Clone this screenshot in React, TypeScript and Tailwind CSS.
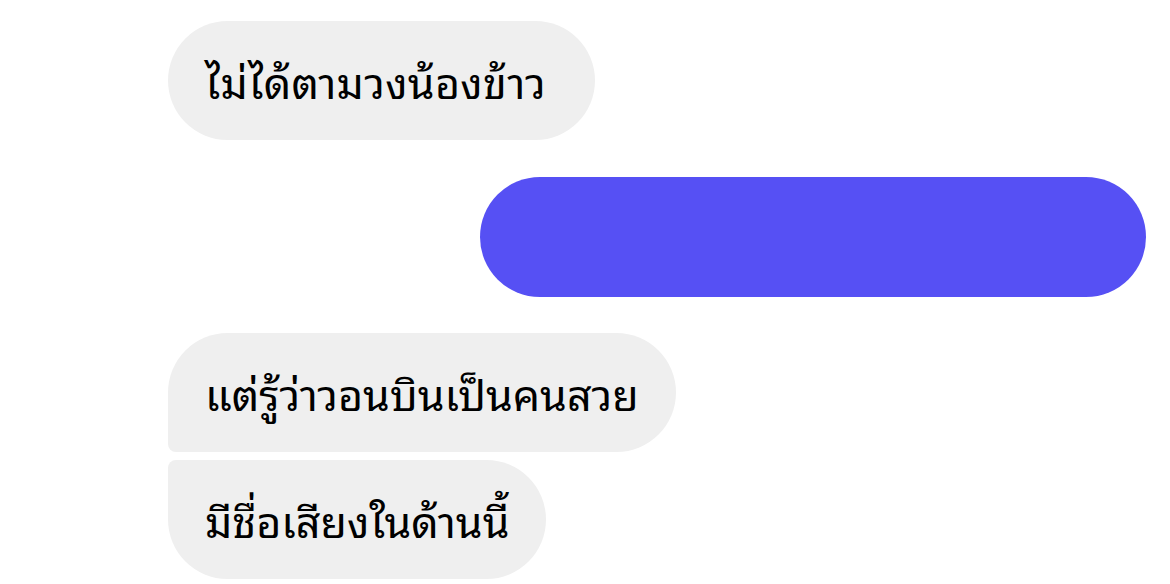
export default function App() {
  return (
    <div
      className="w-[1170px] h-[584px] bg-white overflow-hidden pt-[21px] flex flex-col"
      style={{
        fontFamily:
          '"Noto Sans Thai Looped", "Thonburi", "Loma", "Garuda", "Waree", "Tlwg Typo", "Noto Sans Thai", "Noto Sans", sans-serif',
      }}
    >
      <div className="pl-[168px] flex">
        <div className="h-[119px] pl-[37px] pr-[49px] pb-[2px] flex items-center rounded-[60px] bg-[#efefef] text-black text-[43px] leading-none tracking-[0.3px]">
          ไม่ได้ตามวงน้องข้าว
        </div>
      </div>

      <div className="mt-[37px] flex justify-end pr-[24px]">
        <div className="w-[666px] h-[120px] rounded-[60px] bg-[#5650f4]" />
      </div>

      <div className="mt-[36px] pl-[168px] flex flex-col items-start gap-[8px]">
        <div className="h-[119px] px-[37px] pb-[2px] flex items-center rounded-[60px] rounded-bl-[8px] bg-[#efefef] text-black text-[43px] leading-none">
          แต่รู้ว่าวอนบินเป็นคนสวย
        </div>
        <div className="h-[119px] px-[37px] pb-[2px] flex items-center rounded-[60px] rounded-tl-[8px] bg-[#efefef] text-black text-[43px] leading-none">
          มีชื่อเสียงในด้านนี้
        </div>
      </div>
    </div>
  );
}
